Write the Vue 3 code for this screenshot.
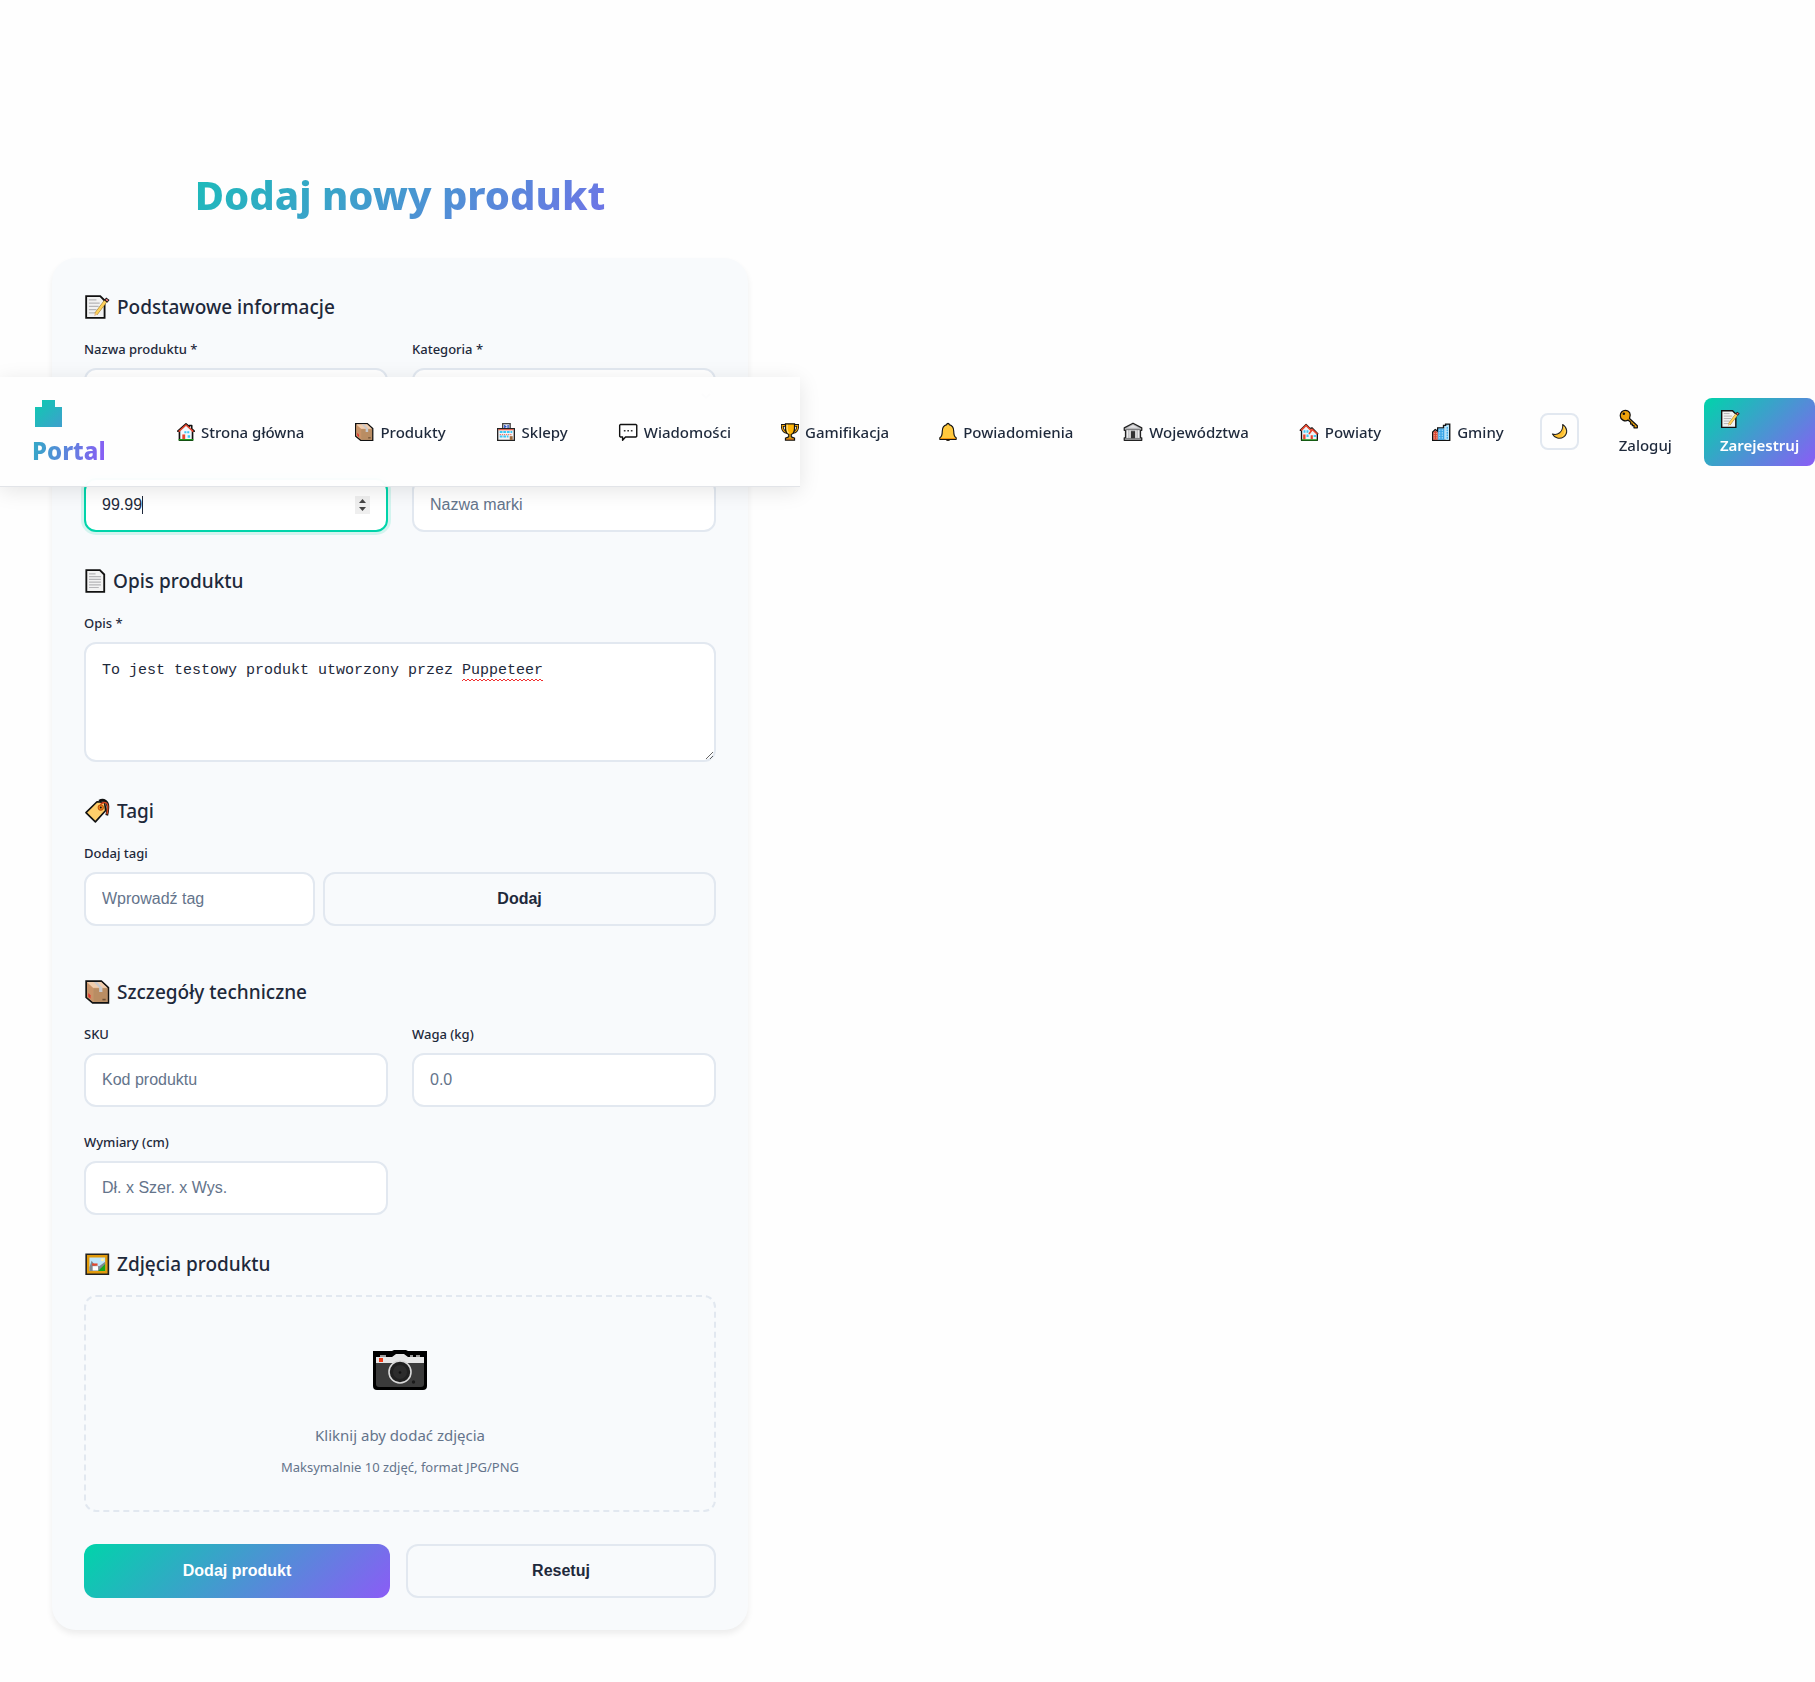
<script setup>
import { ref } from 'vue'

const links = [
  { icon: 'home', text: 'Strona główna', narrow: true },
  { icon: 'box', text: 'Produkty' },
  { icon: 'shop', text: 'Sklepy' },
  { icon: 'chat', text: 'Wiadomości' },
  { icon: 'trophy', text: 'Gamifikacja', narrow: true },
  { icon: 'bell', text: 'Powiadomienia', narrow: true },
  { icon: 'bank', text: 'Województwa' },
  { icon: 'houses', text: 'Powiaty' },
  { icon: 'city', text: 'Gminy' },
]

const price = ref('99.99')
const description = ref('To jest testowy produkt utworzony przez Puppeteer')
</script>

<template>
  <div class="page">
    <svg class="sprite" aria-hidden="true">
      <symbol id="i-home" viewBox="1 0 22 24">
        <path d="M4 22V11H2L12 2l4 3.500V4h3v4l3 3h-2v11z" fill="#f5f7fa" stroke="#111" stroke-width="2" stroke-linejoin="round" />
        <path d="M3 11.500 12 3.500l9 8" fill="none" stroke="#e8452c" stroke-width="1.800" />
        <path d="M10 11h2.500v2.500H10zM13.500 11H16v2.500h-2.500zM14 16h3v3h-3z" fill="#3cc8f4" />
        <path d="M7.500 15h3.500v6H7.500z" fill="#e8452c" />
        <path d="M3 21.500h18" stroke="#16a814" stroke-width="1.600" />
      </symbol>
      <symbol id="i-box" viewBox="0 0 24 24">
        <path d="M2 2h14l6.500 6v14H8l-6-5z" fill="#d9ab82" stroke="#111" stroke-width="1.600" />
        <path d="M2.800 2.800h13L21.500 8H8.500z" fill="#f0cdae" />
        <path d="M2.800 3.500 8.500 8.500v12.500L2.800 16.500z" fill="#c99368" />
        <path d="M8.500 8.500h13.200v12.700H8.500z" fill="#b98d63" />
        <path d="m9 2.800 5 5.200v4h3V8l-5-5.200z" fill="#c9c9cc" />
        <path d="m4 13 2 2v3l-2-1.500z" fill="#e3342f" />
        <path d="M17 19h3" stroke="#6f5136" stroke-width="1.500" />
      </symbol>
      <symbol id="i-shop" viewBox="0 0 24 24">
        <path d="M8 8V2h9v6" fill="#dfe6f5" stroke="#444" stroke-width="1.600" />
        <path d="M10.500 3.500v4M14.500 3.500v4M10.500 5.500h2" stroke="#2b4fc0" stroke-width="1.500" />
        <path d="M2 8h20v14H2z" fill="#f4f4f6" stroke="#222" stroke-width="1.600" />
        <path d="M3 9.300h18" stroke="#e8452c" stroke-width="1.200" />
        <path d="M4.500 12h15M4.500 17.500H15" stroke="#3cc8f4" stroke-width="2.400" stroke-dasharray="3.300 1" />
        <path d="M4.500 15.200h15" stroke="#e8452c" stroke-width="1" stroke-dasharray="1.500 1" />
        <path d="M16.500 17H20v4.500h-3.500z" fill="#9a6a3c" />
      </symbol>
      <symbol id="i-chat" viewBox="0 0 24 24">
        <path d="M3 3h18.500l1 1v13l-1 1H9l-3.500 4v-4H3l-1-1V4z" fill="#fff" stroke="#111" stroke-width="1.700" stroke-linejoin="round" />
        <path d="M7 9.500h2v2H7zM11.200 9.500h2v2h-2zM15.400 9.500h2v2h-2z" fill="#333" />
      </symbol>
      <symbol id="i-trophy" viewBox="1 0 22 24">
        <path d="M7 4H2.500c0 5 2 8 6 8.500M17 4h4.500c0 5-2 8-6 8.500" fill="none" stroke="#111" stroke-width="3.400" />
        <path d="M7 4H2.500c0 5 2 8 6 8.500M17 4h4.500c0 5-2 8-6 8.500" fill="none" stroke="#f2a60c" stroke-width="1.300" />
        <path d="M6.500 2h11v5c0 4.500-1.500 7-4 8v3l4 1.500V22h-11v-2.500l4-1.500v-3c-2.500-1-4-3.500-4-8z" fill="#ffb60a" stroke="#111" stroke-width="1.500" />
        <path d="M8.500 3v5c0 2 .5 4 2 5.500" fill="none" stroke="#ffe08a" stroke-width="1.300" />
        <path d="M7.500 20h9v1.500h-9z" fill="#a4551f" />
      </symbol>
      <symbol id="i-bell" viewBox="1 0 22 24">
        <path d="M9.500 20.500c.5 2.500 4.500 2.500 5 0z" fill="#f5920b" stroke="#111" stroke-width="1.300" />
        <path d="M10.500 3c0-2 3-2 3 0 4 1 5.500 4 5.500 8 0 5 1 7 3 8v2H2v-2c2-1 3-3 3-8 0-4 1.500-7 5.500-8z" fill="#ffc83d" stroke="#111" stroke-width="1.400" stroke-linejoin="round" />
        <path d="M3 20h18" stroke="#f5920b" stroke-width="1.200" />
      </symbol>
      <symbol id="i-bank" viewBox="0 0 24 24">
        <path d="M12 1.500 22.500 7v3H21v9h1.500v3h-21v-3H3v-9H1.500V7z" fill="#b9b9bb" stroke="#222" stroke-width="1.500" stroke-linejoin="round" />
        <path d="M12 3.500 18.500 7h-13z" fill="#e4e4e6" />
        <path d="M3 9.200h18M3 20h18" stroke="#77777a" stroke-width="1.200" />
        <path d="M5.500 10v9M8.500 10v9M15.500 10v9M18.500 10v9" stroke="#eee" stroke-width="1.500" />
        <path d="M9.500 11h5v8.500h-5z" fill="#333" />
      </symbol>
      <symbol id="i-houses" viewBox="0 0 24 24">
        <path d="M3 22V10H1.500L8.500 3l5 5 2-1L22.500 14H22v8z" fill="#eef2f5" stroke="#111" stroke-width="1.600" stroke-linejoin="round" />
        <path d="m2.500 10 6-6 6 6M12 14.500l4-5.500 6 5.500" fill="none" stroke="#e8452c" stroke-width="1.900" />
        <path d="M5.500 10h2.300v3H5.500zM9 10h2.300v3H9zM9 15h2.500v3H9zM17.500 15.500h3V18h-3z" fill="#3cc8f4" />
        <path d="M5 15h2.800v6H5zM14 16h2.600v5H14z" fill="#e8452c" />
        <path d="M3 21.500h19" stroke="#16a814" stroke-width="1.400" />
      </symbol>
      <symbol id="i-city" viewBox="0 0 24 24">
        <path d="M2 22V12l3-3 3 2V7h7V4h2.500V2.500h5V22z" fill="#a9dcf6" stroke="#111" stroke-width="1.600" />
        <path d="M2.800 21.300v-9L5 10.300l3 2v9z" fill="#d9432c" />
        <path d="M8.800 8h7v13.300h-7z" fill="#38a5e8" />
        <path d="M17.500 5h4v16.300h-4z" fill="#bfeaff" />
        <path d="M10.500 9v12M13.500 9v12" stroke="#c9efff" stroke-width="1" stroke-dasharray="2 1" />
        <path d="M19.500 6v15" stroke="#38a5e8" stroke-width="1.600" stroke-dasharray="2 1" />
        <path d="M4 13v8M6.500 13v8" stroke="#f7b4a5" stroke-width="1" stroke-dasharray="1.500 1.200" />
      </symbol>
      <symbol id="i-moon" viewBox="0 0 24 24">
        <path d="M16.500 2c7 5 7.500 13 1.500 17.500-5.500 4-13 2-16-4 7 2.500 15.500-2.500 14.500-13.500z" fill="#ffc02e" stroke="#222" stroke-width="1.500" stroke-linejoin="round" />
        <path d="M18.500 6c2.500 4.500 1.500 9.500-2.500 12.500" fill="none" stroke="#ffdf7a" stroke-width="1.400" />
      </symbol>
      <symbol id="i-key" viewBox="0 0 24 24">
        <path d="M12.600 11.300 22 20v2.500h-4V20h-2v-2h-2v-2l-3.200-2.700C7 16 1.500 12.500 1.500 8c0-4 3-6.500 6-6.500 5 0 7.500 5 5.100 9.800z" fill="#eea20b" stroke="#111" stroke-width="1.500" stroke-linejoin="round" />
        <circle cx="5.800" cy="5.800" r="1.500" fill="#111" />
      </symbol>
      <symbol id="i-memo" viewBox="0 0 24 24">
        <path d="M2 2h13l4 4v16H2z" fill="#f2f2f2" stroke="#111" stroke-width="1.700" />
        <path d="M4.500 5.500h7M4.500 8.500h10M4.500 11.500h9M4.500 14.500h7M4.500 17.500h6" stroke="#b5b5b8" stroke-width="1.200" />
        <path d="M11 18.500 20 6.500" stroke="#9b7a2c" stroke-width="3.200" />
        <path d="M11 18.500 20 6.500" stroke="#ffd15c" stroke-width="2.400" />
        <path d="m19.500 4.500 3 2.300" stroke="#111" stroke-width="3.400" />
        <path d="m20.200 5 1.800 1.300" stroke="#f27c7c" stroke-width="1.600" />
        <path d="m9.500 20.500.5-3 2 1.500z" fill="#e8b98a" />
      </symbol>
      <symbol id="i-page" viewBox="0 0 20 24">
        <path d="M2 2h12.500L18.500 6v16H2z" fill="#f2f2f2" stroke="#111" stroke-width="1.700" />
        <path d="M4.500 5.500h6M4.500 8h11M4.500 10.500h11M4.500 13h11M4.500 15.500h11M4.500 18h9" stroke="#b5b5b8" stroke-width="1.100" />
      </symbol>
      <symbol id="i-tag" viewBox="0 0 24 24">
        <path d="M14 3c4-2.500 8.500 0 8 6-.2 4-.5 5-1 7" fill="none" stroke="#111" stroke-width="2.600" />
        <path d="M1.800 13.500 12 3.500l7 .5 1 7.500L10.500 22z" fill="#ffcf6b" stroke="#111" stroke-width="1.500" stroke-linejoin="round" />
        <path d="M15 8.500c0-5 7-6.500 7-.5 0 3-.5 5-.8 7" fill="none" stroke="#d2451e" stroke-width="1.400" />
        <circle cx="15.500" cy="8.800" r="2.400" fill="#f08a1c" stroke="#c2570f" stroke-width="1" />
        <circle cx="15.500" cy="8.800" r=".9" fill="#111" />
      </symbol>
      <symbol id="i-picture" viewBox="0 0 24 24">
        <path d="M2 3h20.500v18.500H2z" fill="#e29a0a" stroke="#222" stroke-width="1.500" />
        <path d="M5 6h14.500v12.500H5z" fill="#bfe6fb" />
        <path d="m5 15 2-6 3 4 4 1 5.500-4v8.500H5z" fill="#7e8a93" />
        <path d="m13 18.500 6.500-6.500v6.500z" fill="#17a81b" />
        <path d="M7.500 11.500h5v2h-5z" fill="#e8452c" />
        <path d="M8 14h5v4H8z" fill="#fff" />
        <circle cx="17" cy="8" r="1.400" fill="#fff6b0" />
      </symbol>
      <symbol id="i-camera" viewBox="0 0 54 41">
        <path d="M0 1h19l2-1h12l2 1h19v35a4 4 0 0 1-4 4H4a4 4 0 0 1-4-4z" fill="#000" />
        <path d="M3 7h16l4-3h8l4 3h16v7H3z" fill="#e6e6e6" />
        <path d="M7 5h6v2H7zM37 5h3v2h-3zM43 5h4v2h-4z" fill="#9a9a9a" />
        <path d="M3 13h48v21a3 3 0 0 1-3 3H6a3 3 0 0 1-3-3z" fill="#3b3b3b" />
        <path d="M6 8h4v4H6z" fill="#f03a17" />
        <circle cx="27" cy="22" r="11" fill="#202020" stroke="#d8d8d8" stroke-width="1.600" />
        <circle cx="27" cy="22" r="7" fill="#2c2c2c" />
        <circle cx="27" cy="22.500" r="1.300" fill="#111" />
        <circle cx="40.500" cy="32" r="1.700" fill="#1a1a1a" />
      </symbol>
    </svg>

    <nav class="navbar">
      <a class="logo" href="#">
        <svg class="logo-mark" viewBox="0 0 34 39" aria-hidden="true">
          <defs>
            <linearGradient id="logo-grad" x1="0" y1="0" x2="1" y2="1">
              <stop offset="0" stop-color="#0dcbb0" />
              <stop offset="1" stop-color="#3f9fcd" />
            </linearGradient>
          </defs>
          <path d="M10 7h13v7h7v20H3V14h7z" fill="url(#logo-grad)" />
        </svg>
        <span class="logo-text">Portal</span>
      </a>
      <ul class="menu">
        <li v-for="link in links" :key="link.text">
          <a class="link" href="#">
            <svg class="icon" :class="{ narrow: link.narrow }" aria-hidden="true"><use :href="'#i-' + link.icon" /></svg>
            <span>{{ link.text }}</span>
          </a>
        </li>
      </ul>
      <div class="actions">
        <button class="theme" type="button" aria-label="Tryb ciemny">
          <svg class="moon" aria-hidden="true"><use href="#i-moon" /></svg>
        </button>
        <div class="auth">
          <a class="auth-link" href="#">
            <span class="auth-icon"><svg class="icon" aria-hidden="true"><use href="#i-key" /></svg></span>
            <span>Zaloguj</span>
          </a>
          <a class="auth-link register" href="#">
            <span class="auth-icon"><svg class="icon" aria-hidden="true"><use href="#i-memo" /></svg></span>
            <span>Zarejestruj</span>
          </a>
        </div>
      </div>
    </nav>

    <main>
      <h1>Dodaj nowy produkt</h1>
      <form class="card" @submit.prevent>
        <section>
          <h2><svg class="title-icon" aria-hidden="true"><use href="#i-memo" /></svg>Podstawowe informacje</h2>
          <div class="grid">
            <div class="field">
              <label for="name">Nazwa produktu *</label>
              <input id="name" class="control" type="text" />
            </div>
            <div class="field">
              <label for="category">Kategoria *</label>
              <select id="category" class="control"><option></option></select>
            </div>
            <div class="field unlabelled">
              <div class="overlay-host">
                <input v-model="price" class="control active" type="number" step="0.01" aria-label="Cena" />
                <span class="caret" aria-hidden="true"></span>
                <svg class="spinner" viewBox="0 0 15 18" aria-hidden="true">
                  <path d="M0 0h15v18H0z" fill="#efefef" />
                  <path d="M4 7 7.500 3 11 7zM4 11l3.500 4 3.500-4z" fill="#444" />
                </svg>
              </div>
            </div>
            <div class="field unlabelled">
              <input class="control" type="text" placeholder="Nazwa marki" aria-label="Marka" />
            </div>
          </div>
        </section>

        <section>
          <h2><svg class="title-icon narrow" aria-hidden="true"><use href="#i-page" /></svg>Opis produktu</h2>
          <div class="field">
            <label for="description">Opis *</label>
            <div class="overlay-host">
              <textarea id="description" v-model="description" class="control" spellcheck="false"></textarea>
              <svg class="squiggle" aria-hidden="true">
                <defs>
                  <pattern id="wave" width="4" height="4" patternUnits="userSpaceOnUse">
                    <path d="M0 3 2 1l2 2" fill="none" stroke="#f03030" />
                  </pattern>
                </defs>
                <rect width="100%" height="4" fill="url(#wave)" />
              </svg>
            </div>
          </div>
        </section>

        <section class="tags">
          <h2><svg class="title-icon" aria-hidden="true"><use href="#i-tag" /></svg>Tagi</h2>
          <div class="field">
            <label for="tag">Dodaj tagi</label>
            <div class="tag-row">
              <input id="tag" class="control" type="text" placeholder="Wprowadź tag" />
              <button class="btn secondary" type="button">Dodaj</button>
            </div>
          </div>
        </section>

        <section>
          <h2><svg class="title-icon" aria-hidden="true"><use href="#i-box" /></svg>Szczegóły techniczne</h2>
          <div class="grid">
            <div class="field">
              <label for="sku">SKU</label>
              <input id="sku" class="control" type="text" placeholder="Kod produktu" />
            </div>
            <div class="field">
              <label for="weight">Waga (kg)</label>
              <input id="weight" class="control" type="text" placeholder="0.0" />
            </div>
            <div class="field">
              <label for="size">Wymiary (cm)</label>
              <input id="size" class="control" type="text" placeholder="Dł. x Szer. x Wys." />
            </div>
          </div>
        </section>

        <section>
          <h2><svg class="title-icon" aria-hidden="true"><use href="#i-picture" /></svg>Zdjęcia produktu</h2>
          <button class="dropzone" type="button">
            <span class="camera-line"><svg class="camera" aria-hidden="true"><use href="#i-camera" /></svg></span>
            <span class="drop-text">Kliknij aby dodać zdjęcia</span>
            <span class="drop-hint">Maksymalnie 10 zdjęć, format JPG/PNG</span>
          </button>
        </section>

        <div class="buttons">
          <button class="btn primary" type="submit">Dodaj produkt</button>
          <button class="btn secondary" type="reset">Resetuj</button>
        </div>
      </form>
    </main>
  </div>
</template>

<style>
body {
  margin: 0;
  background: #fefefe;
  overflow-x: hidden;
}
</style>

<style scoped>
.page,
.page * {
  box-sizing: border-box;
}

.page {
  position: relative;
  max-width: 800px;
  font-family: "Noto Sans", "Open Sans", sans-serif;
  font-size: 16px;
  line-height: 1.6;
  color: #1e293b;
}

.sprite {
  position: absolute;
  width: 0;
  height: 0;
}

.navbar {
  position: absolute;
  top: 377px;
  left: 0;
  z-index: 10;
  width: 100%;
  display: flex;
  align-items: center;
  padding: 16px 32px;
  background: rgba(254, 254, 254, 0.95);
  backdrop-filter: blur(20px);
  border-bottom: 1px solid #e2e4e8;
  box-shadow: 0 4px 20px rgba(0, 0, 0, 0.1);
  font-size: 15px;
  white-space: nowrap;
}

.navbar > * {
  flex-shrink: 0;
}

.logo {
  width: 72px;
  margin-right: 57px;
  text-decoration: none;
  font-size: 24px;
  font-weight: 800;
}

.logo-mark {
  display: block;
  width: 34px;
  height: 39px;
}

.logo-text {
  display: block;
  background: linear-gradient(100deg, #31abc5, #8b5cf6);
  background-clip: text;
  color: transparent;
}

.menu {
  display: flex;
  gap: 18px;
  margin: 0;
  padding: 0;
  list-style: none;
}

.link {
  display: flex;
  align-items: center;
  gap: 6px;
  padding: 8px 16px;
  color: #1e293b;
  font-weight: 500;
  text-decoration: none;
}

.icon {
  display: block;
  width: 20px;
  height: 20px;
}

.icon.narrow {
  width: 18px;
}

.actions {
  display: flex;
  align-items: center;
  gap: 24px;
  margin-left: 20px;
}

.theme {
  display: flex;
  align-items: center;
  justify-content: center;
  width: 39px;
  height: 37px;
  padding: 0;
  border: 2px solid #e2e8f0;
  border-radius: 8px;
  background: #fefefe;
}

.moon {
  width: 17px;
  height: 17px;
}

.auth {
  display: flex;
  gap: 16px;
}

.auth-link {
  padding: 8px 16px;
  border-radius: 8px;
  color: #1e293b;
  font-weight: 500;
  line-height: 26px;
  text-decoration: none;
}

.auth-link span {
  display: block;
}

.auth-link .auth-icon {
  display: flex;
  align-items: center;
  height: 26px;
}

.register {
  background: linear-gradient(135deg, #00d4aa, #8b5cf6);
  color: #fff;
  font-weight: 600;
}

main {
  padding: 162px 52px 52px;
}

h1 {
  margin: 0 0 30px;
  background: linear-gradient(135deg, #00d4aa, #8b5cf6);
  background-clip: text;
  color: transparent;
  font-size: 40px;
  line-height: 66px;
  font-weight: 800;
  text-align: center;
}

.card {
  display: flex;
  flex-direction: column;
  gap: 32px;
  padding: 32px;
  border-radius: 24px;
  background: #f8fafc;
  box-shadow: 0 4px 6px rgba(0, 0, 0, 0.07);
}

h2 {
  display: flex;
  align-items: center;
  gap: 7px;
  margin: 0 0 14px;
  font-size: 19px;
  line-height: 34px;
  font-weight: 500;
}

.title-icon {
  width: 26px;
  height: 26px;
}

.title-icon.narrow {
  width: 22px;
}

.grid {
  display: grid;
  grid-template-columns: 1fr 1fr;
  gap: 24px;
}

.field label {
  display: block;
  margin-bottom: 8px;
  font-size: 13px;
  line-height: 22px;
  font-weight: 500;
}

.unlabelled {
  padding-top: 30px;
}

.control {
  display: block;
  width: 100%;
  height: 54px;
  padding: 16px;
  border: 2px solid #e2e8f0;
  border-radius: 12px;
  outline: none;
  background: #fff;
  color: #1e293b;
  font-family: "Liberation Sans", Arial, sans-serif;
  font-size: 16px;
}

.control::placeholder {
  color: #64748b;
  opacity: 1;
}

select.control {
  height: 56px;
}

textarea.control {
  height: 120px;
  font-family: "Liberation Mono", monospace;
  font-size: 15px;
  line-height: 22px;
  resize: vertical;
}

.active {
  border-color: #00d4aa;
  box-shadow: 0 0 0 3px rgba(0, 212, 170, 0.15);
}

.active::-webkit-inner-spin-button {
  opacity: 0;
}

.overlay-host {
  position: relative;
}

.caret {
  position: absolute;
  top: 18px;
  left: 58px;
  width: 1px;
  height: 18px;
  background: #1e293b;
}

.spinner {
  position: absolute;
  top: 18px;
  right: 18px;
  width: 15px;
  height: 18px;
  pointer-events: none;
}

.squiggle {
  position: absolute;
  top: 36px;
  left: calc(18px + 40ch);
  width: 9ch;
  height: 4px;
  font-family: "Liberation Mono", monospace;
  font-size: 15px;
}

.tags {
  padding-bottom: 17px;
}

.tag-row {
  display: grid;
  grid-template-columns: 10fr 17fr;
  gap: 8px;
}

.btn {
  padding: 16px 32px;
  border: 0;
  border-radius: 12px;
  font-family: "Liberation Sans", Arial, sans-serif;
  font-size: 16px;
  font-weight: 600;
}

.primary {
  background: linear-gradient(135deg, #00d4aa, #8b5cf6);
  color: #fff;
}

.secondary {
  border: 2px solid #e2e8f0;
  background: #f8fafc;
  color: #1e293b;
}

.dropzone {
  display: flex;
  flex-direction: column;
  align-items: center;
  width: 100%;
  padding: 32px;
  border: 2px dashed #e2e8f0;
  border-radius: 12px;
  background: none;
  color: #64748b;
  font-family: inherit;
  line-height: 1.6;
}

.camera-line {
  display: flex;
  align-items: center;
  height: 77px;
  margin-bottom: 16px;
  padding-top: 6px;
}

.camera {
  width: 54px;
  height: 41px;
}

.drop-text {
  margin-bottom: 8px;
  font-size: 15px;
  line-height: 26px;
}

.drop-hint {
  font-size: 13px;
  line-height: 22px;
}

.buttons {
  display: flex;
  gap: 16px;
}

.buttons .btn {
  flex: 1;
  height: 54px;
}
</style>
